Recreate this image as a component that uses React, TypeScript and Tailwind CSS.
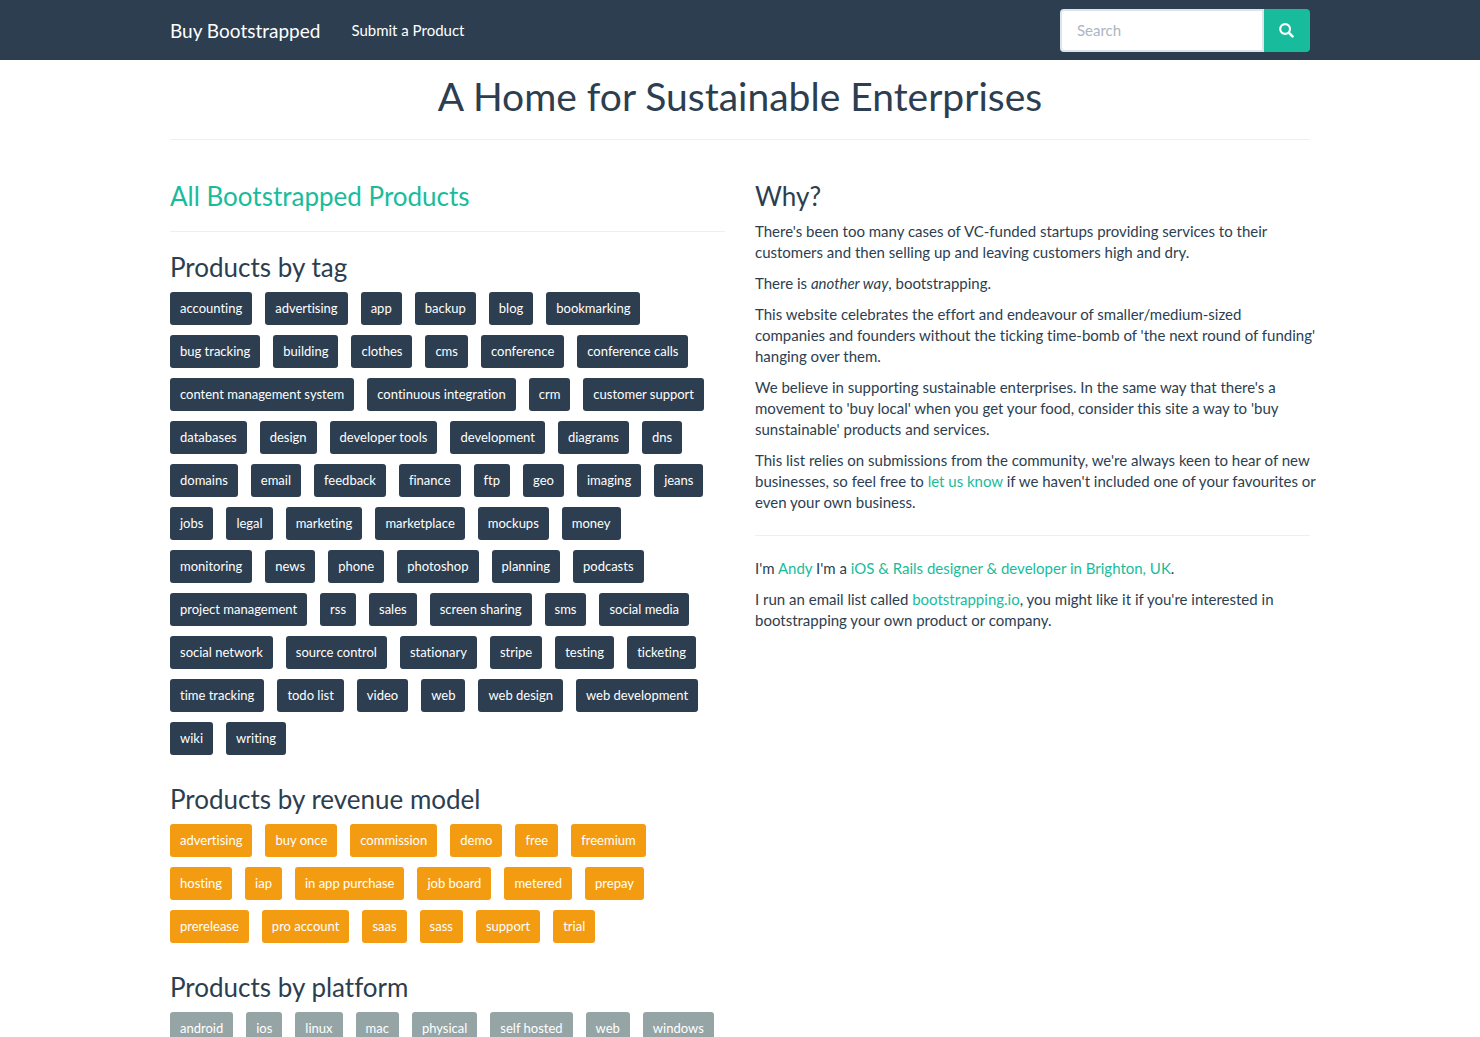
import type { ReactNode } from 'react'

const TAGS = [
  'accounting', 'advertising', 'app', 'backup', 'blog', 'bookmarking', 'bug tracking', 'building',
  'clothes', 'cms', 'conference', 'conference calls', 'content management system',
  'continuous integration', 'crm', 'customer support', 'databases', 'design', 'developer tools',
  'development', 'diagrams', 'dns', 'domains', 'email', 'feedback', 'finance', 'ftp', 'geo',
  'imaging', 'jeans', 'jobs', 'legal', 'marketing', 'marketplace', 'mockups', 'money',
  'monitoring', 'news', 'phone', 'photoshop', 'planning', 'podcasts', 'project management', 'rss',
  'sales', 'screen sharing', 'sms', 'social media', 'social network', 'source control',
  'stationary', 'stripe', 'testing', 'ticketing', 'time tracking', 'todo list', 'video', 'web',
  'web design', 'web development', 'wiki', 'writing',
]

const REVENUE_MODELS = [
  'advertising', 'buy once', 'commission', 'demo', 'free', 'freemium', 'hosting', 'iap',
  'in app purchase', 'job board', 'metered', 'prepay', 'prerelease', 'pro account', 'saas', 'sass',
  'support', 'trial',
]

const PLATFORMS = ['android', 'ios', 'linux', 'mac', 'physical', 'self hosted', 'web', 'windows']

function TagList({ title, tags, color }: { title: string; tags: string[]; color: string }) {
  return (
    <section className="mb-[30px]">
      <h2 className="mb-2.5 text-[26px] leading-[29px]">{title}</h2>
      <ul className="flex flex-wrap gap-x-[13px] gap-y-2.5 pr-2.5">
        {tags.map(tag => (
          <li key={tag}>
            <a href="#" className={`block rounded-[3px] px-2.5 py-1.5 text-[13px] leading-[21px] text-white ${color}`}>
              {tag}
            </a>
          </li>
        ))}
      </ul>
    </section>
  )
}

function TextLink({ children }: { children: ReactNode }) {
  return <a href="#" className="text-[#18bc9c] hover:underline">{children}</a>
}

export default function App() {
  return (
    <div className="min-h-screen bg-white font-['Lato',sans-serif] text-[15px] leading-[21px] text-[#2c3e50] [font-variant-ligatures:none] [text-rendering:optimizeSpeed]">
      <nav className="bg-[#2c3e50] text-white">
        <div className="mx-auto flex h-[60px] max-w-[1170px] items-center px-[15px]">
          <a href="#" className="text-[19px] leading-[19px]">Buy Bootstrapped</a>
          <a href="#" className="ml-[31px]">Submit a Product</a>
          <form className="ml-auto flex" onSubmit={e => e.preventDefault()}>
            <input
              type="text"
              aria-label="Search"
              placeholder="Search"
              className="h-[43px] w-[204px] rounded-l border-2 border-[#dce4ec] bg-white px-[15px] text-[#2c3e50] outline-none placeholder:text-[#acb6c0]"
            />
            <button type="submit" aria-label="Search" className="flex items-center rounded-r bg-[#18bc9c] pr-4 pl-[15px]">
              <svg viewBox="0 0 15 15" className="size-[15px]" fill="none" stroke="currentColor">
                <circle cx="6.1" cy="6" r="4.9" strokeWidth="2.1" />
                <path d="M9.8 9.7l3.7 3.7" strokeWidth="2.6" strokeLinecap="round" />
              </svg>
            </button>
          </form>
        </div>
      </nav>

      <main className="mx-auto max-w-[1170px] px-[15px]">
        <h1 className="mb-[21px] border-b border-[#ecf0f1] pt-3.5 pb-[21px] text-center text-[39px] leading-[44px]">
          A Home for Sustainable Enterprises
        </h1>

        <div className="grid grid-cols-2 gap-[30px] pt-[21px]">
          <div>
            <h2 className="text-[26px] leading-[29px]">
              <TextLink>All Bootstrapped Products</TextLink>
            </h2>
            <hr className="mt-5 mb-[21px] border-[#ecf0f1]" />
            <TagList title="Products by tag" tags={TAGS} color="bg-[#2c3e50]" />
            <TagList title="Products by revenue model" tags={REVENUE_MODELS} color="bg-[#f39c12]" />
            <TagList title="Products by platform" tags={PLATFORMS} color="bg-[#95a5a6]" />
          </div>

          <div>
            <h2 className="mb-2.5 text-[26px] leading-[29px]">Why?</h2>
            <div className="-mr-2.5 flex flex-col gap-2.5">
              <p>
                There's been too many cases of VC-funded startups providing services to their customers and then
                selling up and leaving customers high and dry.
              </p>
              <p>There is <em>another way</em>, bootstrapping.</p>
              <p>
                This website celebrates the effort and endeavour of smaller/medium-sized
                <br />
                companies and founders without the ticking time-bomb of 'the next round of funding' hanging over them.
              </p>
              <p>
                We believe in supporting sustainable enterprises. In the same way that there's a movement to 'buy
                local' when you get your food, consider this site a way to 'buy sunstainable' products and services.
              </p>
              <p>
                This list relies on submissions from the community, we're always keen to hear of new businesses, so
                feel free to <TextLink>let us know</TextLink> if we haven't included one of your favourites or even
                your own business.
              </p>
            </div>
            <hr className="my-[22px] border-[#ecf0f1]" />
            <div className="flex flex-col gap-2.5">
              <p>
                I'm <TextLink>Andy</TextLink> I'm a{' '}
                <TextLink>iOS &amp; Rails designer &amp; developer in Brighton, UK</TextLink>.
              </p>
              <p>
                I run an email list called <TextLink>bootstrapping.io</TextLink>, you might like it if you're
                interested in bootstrapping your own product or company.
              </p>
            </div>
          </div>
        </div>
      </main>
    </div>
  )
}
